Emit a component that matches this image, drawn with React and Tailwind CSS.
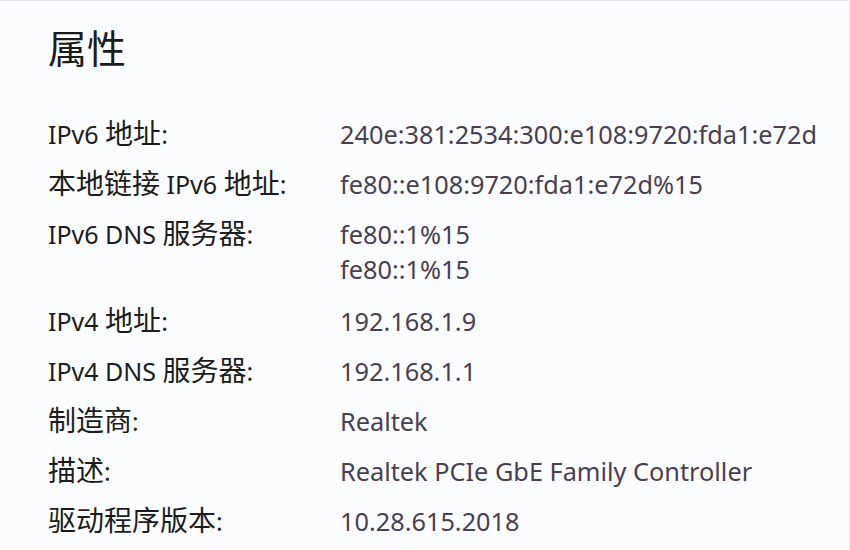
import React from "react";

const rows = [
  { label: "IPv6 地址:", values: ["240e:381:2534:300:e108:9720:fda1:e72d"] },
  { label: "本地链接 IPv6 地址:", values: ["fe80::e108:9720:fda1:e72d%15"] },
  { label: "IPv6 DNS 服务器:", values: ["fe80::1%15", "fe80::1%15"] },
  { label: "IPv4 地址:", values: ["192.168.1.9"] },
  { label: "IPv4 DNS 服务器:", values: ["192.168.1.1"] },
  { label: "制造商:", values: ["Realtek"] },
  { label: "描述:", values: ["Realtek PCIe GbE Family Controller"] },
  { label: "驱动程序版本:", values: ["10.28.615.2018"] },
];

function Label({ text }) {
  const parts = text.split(/([\u4e00-\u9fff]+)/).filter(Boolean);
  return (
    <div className="text-[#1c1c1c] whitespace-nowrap h-[35px]">
      {parts.map((p, i) =>
        /[\u4e00-\u9fff]/.test(p) ? (
          <span key={i} className="text-[28px] leading-none">{p}</span>
        ) : (
          <span key={i}>{p}</span>
        )
      )}
    </div>
  );
}

export default function App() {
  return (
    <div
      className="w-[850px] h-[550px] overflow-hidden bg-[#fbfcfd] border-t border-r border-[#e6e8eb] pl-[48px] pt-[22px]"
      style={{ fontFamily: '"Noto Sans", "Noto Sans CJK SC", sans-serif' }}
    >
      <h1 className="text-[39px] leading-[50px] text-[#1b1b1b] font-normal">属性</h1>
      <div className="mt-[44px] flex flex-col gap-[15px]">
        {rows.map((r) => (
          <div
            key={r.label}
            className={
              r.values.length > 1
                ? "grid grid-cols-[292px_1fr] text-[25px] leading-[35px] mb-[2px]"
                : "grid grid-cols-[292px_1fr] text-[25px] leading-[35px]"
            }
          >
            <Label text={r.label} />
            <div className="flex flex-col text-[#4a3f4e] text-[25.3px]">
              {r.values.map((v, i) => (
                <div key={i}>{v}</div>
              ))}
            </div>
          </div>
        ))}
      </div>
    </div>
  );
}
